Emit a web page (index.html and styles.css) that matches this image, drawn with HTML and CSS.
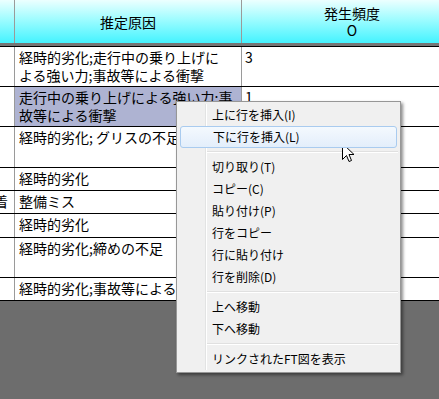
FILE: index.html
```html
<!DOCTYPE html>
<html lang="ja">
<head>
<meta charset="utf-8">
<title>推定原因</title>
<link rel="stylesheet" href="styles.css">
</head>
<body>
<div class="sheet">
  <div class="row head">
    <div class="cell"></div>
    <div class="cell hc">推定原因</div>
    <div class="cell hc wide">発生頻度<br>O</div>
  </div>
  <div class="row h40">
    <div class="cell"></div>
    <div class="cell tx">経時的劣化;走行中の乗り上げに<br>よる強い力;事故等による衝撃</div>
    <div class="cell num">3</div>
  </div>
  <div class="row h40">
    <div class="cell"></div>
    <div class="cell tx sel">走行中の乗り上げによる強い力;事<br>故等による衝撃</div>
    <div class="cell num">1</div>
  </div>
  <div class="row h41">
    <div class="cell"></div>
    <div class="cell tx">経時的劣化; グリスの不足</div>
    <div class="cell num"></div>
  </div>
  <div class="row h23">
    <div class="cell"></div>
    <div class="cell tx">経時的劣化</div>
    <div class="cell num"></div>
  </div>
  <div class="row h23">
    <div class="cell clip"><span>着</span></div>
    <div class="cell tx">整備ミス</div>
    <div class="cell num"></div>
  </div>
  <div class="row h24">
    <div class="cell"></div>
    <div class="cell tx">経時的劣化</div>
    <div class="cell num"></div>
  </div>
  <div class="row h40">
    <div class="cell"></div>
    <div class="cell tx">経時的劣化;締めの不足</div>
    <div class="cell num"></div>
  </div>
  <div class="row h23 last">
    <div class="cell"></div>
    <div class="cell tx nowrap">経時的劣化;事故等による衝撃</div>
    <div class="cell num"></div>
  </div>
</div>

<div class="menu">
  <div class="item">上に行を挿入(I)</div>
  <div class="item hot">下に行を挿入(L)</div>
  <div class="sep"></div>
  <div class="item">切り取り(T)</div>
  <div class="item">コピー(C)</div>
  <div class="item">貼り付け(P)</div>
  <div class="item">行をコピー</div>
  <div class="item">行に貼り付け</div>
  <div class="item">行を削除(D)</div>
  <div class="sep"></div>
  <div class="item">上へ移動</div>
  <div class="item">下へ移動</div>
  <div class="sep"></div>
  <div class="item">リンクされたFT図を表示</div>
</div>

<svg class="cursor" width="13" height="21" viewBox="0 0 13 21">
  <path d="M0.5 0.5 L0.5 16.5 L4.5 12.5 L7 18.5 L9.5 17.5 L7 11.5 L12 11.5 Z" fill="#fff" stroke="#000" stroke-width="1" stroke-linejoin="miter"/>
</svg>
</body>
</html>
```

FILE: styles.css
```css
html, body {
  margin: 0;
  padding: 0;
}
body {
  width: 439px;
  height: 399px;
  background: #6d6d6d;
  overflow: hidden;
  position: relative;
  font-family: "Noto Sans CJK JP", "Noto Sans", sans-serif;
}
.sheet {
  width: 439px;
  background: #fff;
  border-bottom: 1px solid #000;
}
.row {
  display: grid;
  grid-template-columns: 15px 227px 197px;
  border-top: 1px solid #000;
  box-sizing: border-box;
}
.row.head {
  border-top: none;
  height: 46px;
  border-bottom: 3px solid #767676;
  background: linear-gradient(to bottom, #ecffff 0%, #9ffcff 45%, #44f3ff 100%);
}
.h40 { height: 40px; }
.h41 { height: 41px; }
.h23 { height: 23px; }
.h24 { height: 24px; }
.cell {
  box-sizing: border-box;
  border-right: 1px solid #9a9a9a;
  font-size: 14px;
  line-height: 18px;
  color: #000;
  overflow: hidden;
}
.cell:last-child {
  border-right: none;
}
.hc {
  display: flex;
  align-items: center;
  justify-content: center;
  text-align: center;
  line-height: 17px;
  padding-top: 1px;
}
.hc.wide {
  padding-left: 23px;
}
.tx {
  padding: 1px 0 0 4px;
  white-space: nowrap;
}
.num {
  padding: 1px 0 0 3px;
}
.sel {
  background: #aeb3d2;
}
.clip {
  display: flex;
  justify-content: flex-end;
  white-space: nowrap;
  padding: 1px 6px 0 0;
}

.menu {
  position: absolute;
  left: 176px;
  top: 101px;
  width: 225px;
  box-sizing: border-box;
  background: #f0f0f0;
  border: 1px solid #979797;
  padding: 2px;
  box-shadow: 2px 2px 3px rgba(0, 0, 0, 0.45);
  font-size: 12px;
  color: #000;
}
.menu::before {
  content: "";
  position: absolute;
  left: 28px;
  top: 2px;
  bottom: 2px;
  width: 0;
  border-left: 1px solid #e2e3e3;
  border-right: 1px solid #fff;
}
.item {
  position: relative;
  z-index: 1;
  height: 22px;
  line-height: 22px;
  padding-left: 33px;
  box-sizing: border-box;
  white-space: nowrap;
}
.item.hot {
  margin: 0 1px 0 1px;
  padding-left: 32px;
  line-height: 20px;
  border: 1px solid #a9cbef;
  border-radius: 3px;
  background: linear-gradient(to bottom, #f4f9fe, #e3eefb);
}
.sep {
  height: 0;
  margin: 3px 0 3px 28px;
  border-top: 1px solid #e0e0e0;
  border-bottom: 1px solid #fff;
}
.cursor {
  position: absolute;
  left: 342px;
  top: 143px;
}
```
